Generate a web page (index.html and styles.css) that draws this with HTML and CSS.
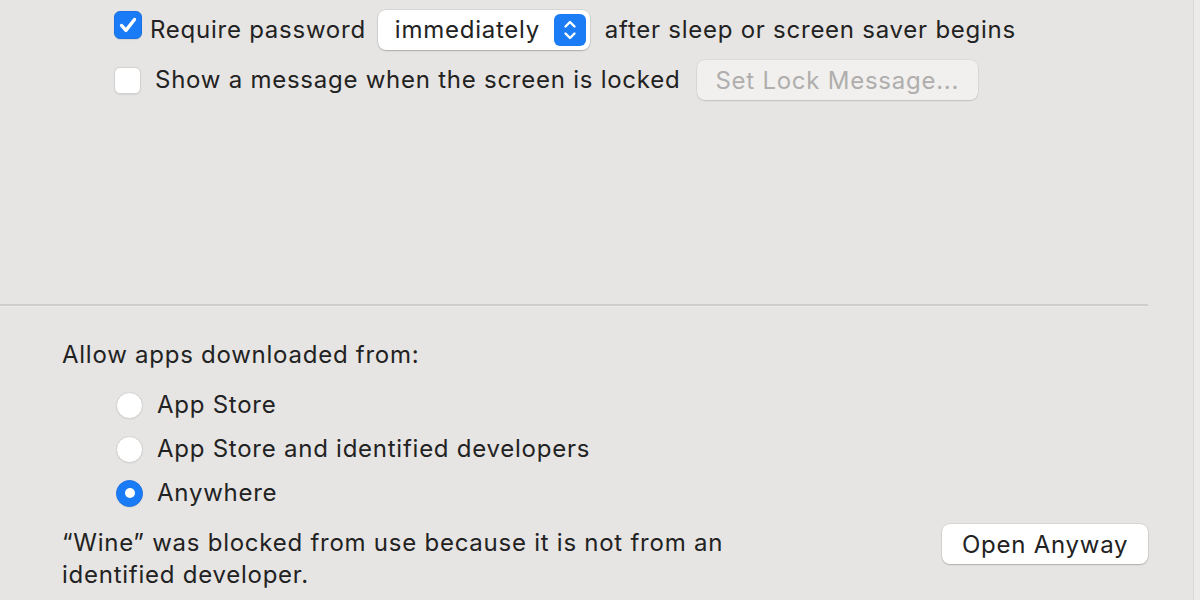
FILE: index.html
```html
<!DOCTYPE html>
<html>
<head>
<meta charset="utf-8">
<link rel="stylesheet" href="styles.css">
</head>
<body>
<div class="window">
  <div class="content">
    <section class="top">
      <div class="row row-first">
        <span class="checkbox checked">
          <svg viewBox="0 0 28 28" width="28" height="28"><path d="M7 14.5 L11.8 19.8 L21 8" fill="none" stroke="#fff" stroke-width="3.6" stroke-linecap="round" stroke-linejoin="round"/></svg>
        </span>
        <span class="label label-req">Require password</span>
        <span class="popup">
          <span class="popup-text">immediately</span>
          <span class="stepper">
            <svg viewBox="0 0 32 32" width="32" height="32"><path d="M11.5 12.5 L16 8 L20.5 12.5" fill="none" stroke="#fff" stroke-width="2.4" stroke-linecap="round" stroke-linejoin="round"/><path d="M11.5 19.5 L16 24 L20.5 19.5" fill="none" stroke="#fff" stroke-width="2.4" stroke-linecap="round" stroke-linejoin="round"/></svg>
          </span>
        </span>
        <span class="label label-after">after sleep or screen saver begins</span>
      </div>
      <div class="row row-second">
        <span class="checkbox"></span>
        <span class="label label-show">Show a message when the screen is locked</span>
        <span class="button disabled">Set Lock Message...</span>
      </div>
    </section>
    <div class="separator"></div>
    <section class="bottom">
      <div class="heading">Allow apps downloaded from:</div>
      <div class="radios">
        <div class="radio-row"><span class="radio"></span><span class="label">App Store</span></div>
        <div class="radio-row"><span class="radio"></span><span class="label">App Store and identified developers</span></div>
        <div class="radio-row"><span class="radio selected"><span class="dot"></span></span><span class="label">Anywhere</span></div>
      </div>
      <div class="footer">
        <p class="message">“Wine” was blocked from use because it is not from an identified developer.</p>
        <span class="button open">Open Anyway</span>
      </div>
    </section>
  </div>
  <div class="edge"></div>
</div>
</body>
</html>
```

FILE: styles.css
```css
html, body {
  margin: 0;
  padding: 0;
}
body {
  background: #e6e5e3;
  font-family: Inter, "Open Sans", "Liberation Sans", sans-serif;
  font-size: 24px;
  letter-spacing: 0.75px;
  color: #222222;
  -webkit-font-smoothing: antialiased;
}
.window {
  display: flex;
  width: 1200px;
  height: 600px;
  overflow: hidden;
}
.content {
  width: 1193px;
  flex: none;
}
.edge {
  flex: 1;
  background: #ecebe9;
  border-left: 1px solid #d8d7d5;
}
.top {
  height: 304px;
  box-sizing: border-box;
  padding-top: 10px;
  padding-left: 114px;
}
.row {
  display: flex;
  align-items: center;
  height: 40px;
}
.row-second {
  margin-top: 10px;
}
.label {
  white-space: nowrap;
  position: relative;
  top: -1px;
}
.checkbox {
  width: 27px;
  height: 27px;
  box-sizing: border-box;
  border-radius: 6px;
  background: #ffffff;
  border: 1px solid #d3d2d0;
  box-shadow: 0 0.5px 1px rgba(0,0,0,0.08);
  flex: none;
  display: flex;
  align-items: center;
  justify-content: center;
}
.checkbox.checked {
  align-self: flex-start;
  margin-top: 1px;
  width: 28px;
  height: 28px;
  background: #1a7bf6;
  border-color: #1a72e6;
}
.checkbox svg {
  width: 26px;
  height: 26px;
}
.label-req {
  margin-left: 8px;
}
.label-show {
  margin-left: 14px;
}
.popup {
  margin-left: 12px;
  width: 212px;
  height: 40px;
  box-sizing: border-box;
  background: #ffffff;
  border-radius: 8px;
  box-shadow: 0 0 0 0.5px rgba(0,0,0,0.12), 0 1px 1.5px rgba(0,0,0,0.2);
  display: flex;
  align-items: center;
  padding-left: 17px;
  padding-right: 4px;
}
.popup-text {
  flex: 1;
  position: relative;
  top: -1px;
}
.stepper {
  width: 32px;
  height: 32px;
  border-radius: 6px;
  background: #1b7cf6;
  display: flex;
  align-items: center;
  justify-content: center;
}
.label-after {
  margin-left: 15px;
}
.button {
  height: 40px;
  box-sizing: border-box;
  border-radius: 8px;
  display: flex;
  align-items: center;
  white-space: nowrap;
}
.button.disabled {
  margin-left: 17px;
  width: 281px;
  padding-left: 18px;
  background: #f1f0ef;
  color: #afaeac;
  box-shadow: 0 0 0 0.5px rgba(0,0,0,0.08), 0 1px 1.5px rgba(0,0,0,0.12);
}
.separator {
  width: 1148px;
  height: 2px;
  background: #cfcecc;
  border-bottom: 1px solid #ebeae8;
}
.bottom {
  padding-left: 62px;
  padding-right: 45px;
}
.heading {
  margin-top: 32px;
  height: 32px;
  line-height: 32px;
}
.radios {
  margin-top: 12px;
  padding-left: 54px;
}
.radio-row {
  display: flex;
  align-items: center;
  height: 44px;
}
.radio {
  width: 27px;
  height: 27px;
  box-sizing: border-box;
  border-radius: 50%;
  background: #ffffff;
  border: 1px solid #d3d2d0;
  box-shadow: 0 0.5px 1px rgba(0,0,0,0.08);
  margin-right: 14px;
  display: flex;
  align-items: center;
  justify-content: center;
  flex: none;
}
.radio.selected {
  background: #1a7bf6;
  border-color: #1a72e6;
}
.dot {
  width: 10px;
  height: 10px;
  border-radius: 50%;
  background: #ffffff;
}
.footer {
  margin-top: 13px;
  display: flex;
  align-items: flex-start;
  justify-content: space-between;
}
.message {
  margin: 0;
  width: 690px;
  line-height: 32px;
  position: relative;
  top: -1px;
}
.button.open {
  margin-top: -4px;
  width: 206px;
  padding-left: 20px;
  background: #ffffff;
  box-shadow: 0 0 0 0.5px rgba(0,0,0,0.12), 0 1px 1.5px rgba(0,0,0,0.2);
}
```
